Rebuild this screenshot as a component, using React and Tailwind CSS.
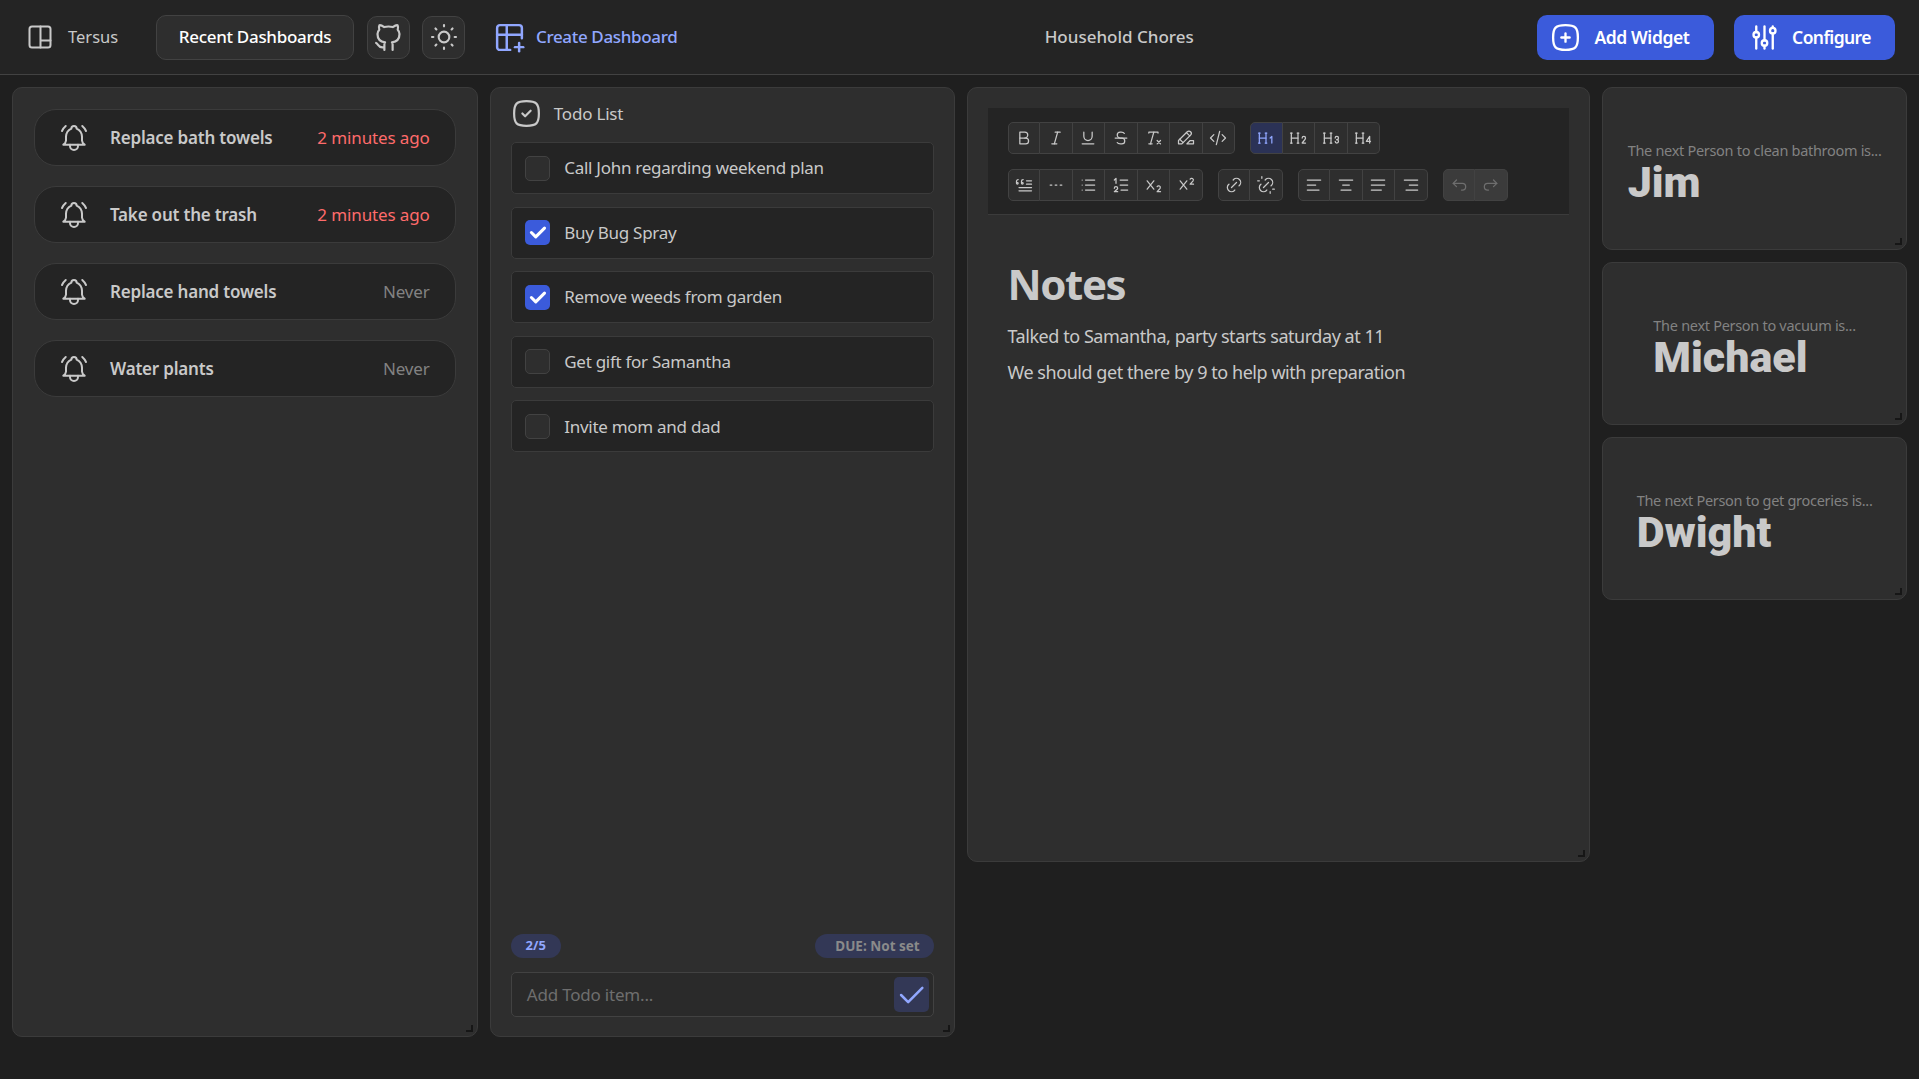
import React from 'react';
import {
  TbBrandGithub, TbSun, TbTablePlus, TbSquareRoundedPlus, TbAdjustments, TbBellRinging,
  TbSquareRoundedCheck, TbCheck, TbBold, TbItalic, TbUnderline, TbStrikethrough, TbClearFormatting, TbHighlight,
  TbCode, TbH1, TbH2, TbH3, TbH4, TbBlockquote, TbLineDashed, TbList, TbListNumbers, TbSubscript, TbSuperscript,
  TbLink, TbUnlink, TbAlignLeft, TbAlignCenter, TbAlignJustified, TbAlignRight, TbArrowBackUp, TbArrowForwardUp,
} from 'react-icons/tb';

const chores = [
  { name: 'Replace bath towels', last: '2 minutes ago', overdue: true },
  { name: 'Take out the trash', last: '2 minutes ago', overdue: true },
  { name: 'Replace hand towels', last: 'Never' },
  { name: 'Water plants', last: 'Never' },
];

const todos = [
  { text: 'Call John regarding weekend plan' },
  { text: 'Buy Bug Spray', done: true },
  { text: 'Remove weeds from garden', done: true },
  { text: 'Get gift for Samantha' },
  { text: 'Invite mom and dad' },
];

const people = [
  { task: 'The next Person to clean bathroom is...', name: 'Jim' },
  { task: 'The next Person to vacuum is...', name: 'Michael' },
  { task: 'The next Person to get groceries is...', name: 'Dwight' },
];

const toolbarRows = [
  [[TbBold, TbItalic, TbUnderline, TbStrikethrough, TbClearFormatting, TbHighlight, TbCode], [TbH1, TbH2, TbH3, TbH4]],
  [
    [TbBlockquote, TbLineDashed, TbList, TbListNumbers, TbSubscript, TbSuperscript],
    [TbLink, TbUnlink],
    [TbAlignLeft, TbAlignCenter, TbAlignJustified, TbAlignRight],
    [TbArrowBackUp, TbArrowForwardUp],
  ],
];

// app logo, not in the icon set
const LogoIcon = () => (
  <svg width="24" height="24" viewBox="0 0 24 24" fill="none" stroke="currentColor" strokeWidth="2" strokeLinecap="round" strokeLinejoin="round">
    <rect x="1.5" y="1.5" width="21" height="21" rx="2.5" />
    <path d="M12.5 1.5v21M12.5 15.5h10" />
  </svg>
);

const ResizeHandle = () => (
  <span className="absolute right-[4px] bottom-[4px] w-[7px] h-[7px] border-r-2 border-b-2 border-[#161616]" />
);

const Card = ({ className, children }) => (
  <div className={`relative bg-[#2e2e2e] border border-[#3b3b3b] rounded-[10px] ${className}`}>
    {children}
    <ResizeHandle />
  </div>
);

const ToolGroup = ({ icons }) => (
  <div className="flex">
    {icons.map((Icon, i) => {
      const active = Icon === TbH1;
      const disabled = Icon === TbArrowBackUp || Icon === TbArrowForwardUp;
      return (
        <div
          key={i}
          className={`w-[32.5px] h-[32px] flex items-center justify-center border border-l-0 border-[#424242] first:border-l first:rounded-l-[5px] last:rounded-r-[5px] ${
            active ? 'bg-[#2b3256] text-[#91a7ff]' : disabled ? 'bg-[#3b3b3b] text-[#6e6e6e]' : 'bg-[#2e2e2e] text-[#c9c9c9]'
          }`}
        >
          <Icon size={20} strokeWidth={1.5} />
        </div>
      );
    })}
  </div>
);

export default function App() {
  return (
    <div className="min-h-screen bg-[#1f1f1f] font-['Noto_Sans',sans-serif] text-[#c9c9c9]">
      <header className="h-[75px] bg-[#242424] border-b border-[#424242] flex items-center pl-[28px] pr-[24px]">
        <LogoIcon />
        <span className="ml-[16px] text-[16.5px] w-[88px]">Tersus</span>
        <div className="w-[198px] h-[45px] bg-[#2e2e2e] border border-[#424242] rounded-[10px] flex items-center justify-center text-white text-[17px] font-medium tracking-[-0.3px]">
          Recent Dashboards
        </div>
        <div className="ml-[13px] w-[43px] h-[43px] bg-[#2e2e2e] border border-[#424242] rounded-[10px] flex items-center justify-center">
          <TbBrandGithub size={33} strokeWidth={1.6} />
        </div>
        <div className="ml-[12px] w-[43px] h-[43px] bg-[#2e2e2e] border border-[#424242] rounded-[10px] flex items-center justify-center">
          <TbSun size={32} strokeWidth={1.6} />
        </div>
        <TbTablePlus size={33} strokeWidth={1.8} className="ml-[28px] -mr-[1px] text-[#91a7ff]" />
        <span className="ml-[11px] text-[#91a7ff] text-[17px] font-medium tracking-[-0.35px]">Create Dashboard</span>
        <div className="flex-1 flex justify-center pl-[24px] text-[17px] font-medium">Household Chores</div>
        <button className="w-[177px] h-[45px] pr-[12px] bg-[#3b5bdb] rounded-[10px] flex items-center justify-center gap-[12px] text-white text-[17.5px] font-semibold tracking-[-0.4px]">
          <TbSquareRoundedPlus size={33} strokeWidth={1.7} />
          Add Widget
        </button>
        <button className="ml-[20px] w-[161px] h-[45px] pr-[10px] bg-[#3b5bdb] rounded-[10px] flex items-center justify-center gap-[11px] text-white text-[17.5px] font-semibold tracking-[-0.6px]">
          <TbAdjustments size={33} strokeWidth={1.7} />
          Configure
        </button>
      </header>

      <main className="flex items-start gap-[12px] pt-[12px] px-[12px]">
        <Card className="w-[466px] h-[950px] pt-[21px] px-[21px]">
          <div className="flex flex-col gap-[20px]">
            {chores.map((chore) => (
              <div key={chore.name} className="h-[57px] bg-[#242424] border border-[#3b3b3b] rounded-[22px] flex items-center pl-[23px] pr-[25px]">
                <TbBellRinging size={32} strokeWidth={1.5} />
                <span className="ml-[20px] flex-1 text-[17px] font-semibold tracking-[-0.2px]">{chore.name}</span>
                <span className={`text-[17px] tracking-[-0.12px] ${chore.overdue ? 'text-[#ff6b6b]' : 'text-[#828282]'}`}>{chore.last}</span>
              </div>
            ))}
          </div>
        </Card>

        <Card className="w-[465px] h-[950px] px-[20px] flex flex-col">
          <div className="h-[54px] flex items-center -ml-[1px] pb-[3px]">
            <TbSquareRoundedCheck size={33} strokeWidth={1.6} />
            <span className="ml-[11px] text-[17px] tracking-[-0.2px]">Todo List</span>
          </div>
          <div className="flex flex-col gap-[12.6px]">
            {todos.map((todo) => (
              <div key={todo.text} className="h-[52px] bg-[#242424] border border-[#3b3b3b] rounded-[5px] flex items-center pl-[13px]">
                {todo.done ? (
                  <span className="w-[25px] h-[25px] rounded-[5px] bg-[#3b5bdb] flex items-center justify-center text-white">
                    <TbCheck size={21} strokeWidth={3.5} />
                  </span>
                ) : (
                  <span className="w-[25px] h-[25px] rounded-[5px] bg-[#2e2e2e] border border-[#424242]" />
                )}
                <span className="ml-[14.5px] text-[17px] tracking-[-0.28px]">{todo.text}</span>
              </div>
            ))}
          </div>
          <div className="mt-auto flex justify-between">
            <span className="h-[24px] w-[50px] rounded-full bg-[#333856] text-[#91a7ff] text-[13px] font-bold flex items-center justify-center">2/5</span>
            <span className="h-[24px] w-[119px] pl-[7px] rounded-full bg-[#333856] text-[#8a8a8a] text-[13.5px] font-bold flex items-center justify-center">DUE: Not set</span>
          </div>
          <div className="mt-[14px] mb-[19px] h-[45px] bg-[#2a2a2a] border border-[#424242] rounded-[5px] flex items-center justify-between pl-[15px] pr-[4px]">
            <span className="text-[#6e6e6e] text-[17px] tracking-[-0.2px]">Add Todo item...</span>
            <span className="w-[35px] h-[35px] rounded-[5px] bg-[#333856] text-[#91a7ff] flex items-center justify-center">
              <TbCheck size={34} strokeWidth={1.8} />
            </span>
          </div>
        </Card>

        <Card className="w-[624px] h-[775px] pt-[20px] px-[20px]">
          <div className="bg-[#242424] border-b border-[#3b3b3b] h-[107px] px-[20px] pt-[14px]">
            {toolbarRows.map((groups, i) => (
              <div key={i} className={`flex gap-[15px] ${i === 1 ? 'mt-[15px]' : ''}`}>
                {groups.map((icons, j) => (
                  <ToolGroup key={j} icons={icons} />
                ))}
              </div>
            ))}
          </div>
          <div className="px-[20px]">
            <h1 className="mt-[41px] text-[42px] leading-[56px] font-bold tracking-[-1.4px]">Notes</h1>
            <p className="mt-[6px] text-[18px] leading-[36px] tracking-[-0.45px]">Talked to Samantha, party starts saturday at 11</p>
            <p className="text-[18px] leading-[36px] tracking-[-0.45px]">We should get there by 9 to help with preparation</p>
          </div>
        </Card>

        <div className="w-[305px] flex flex-col gap-[12px]">
          {people.map((person) => (
            <Card key={person.name} className="h-[163px] flex items-center justify-center">
              <div className="pt-[6px]">
                <div className="text-[14.5px] leading-[20px] text-[#828282] tracking-[-0.3px]">{person.task}</div>
                <div className="font-['Roboto',sans-serif] text-[43px] leading-[44px] font-black text-[#c9c9c9]">{person.name}</div>
              </div>
            </Card>
          ))}
        </div>
      </main>
    </div>
  );
}
